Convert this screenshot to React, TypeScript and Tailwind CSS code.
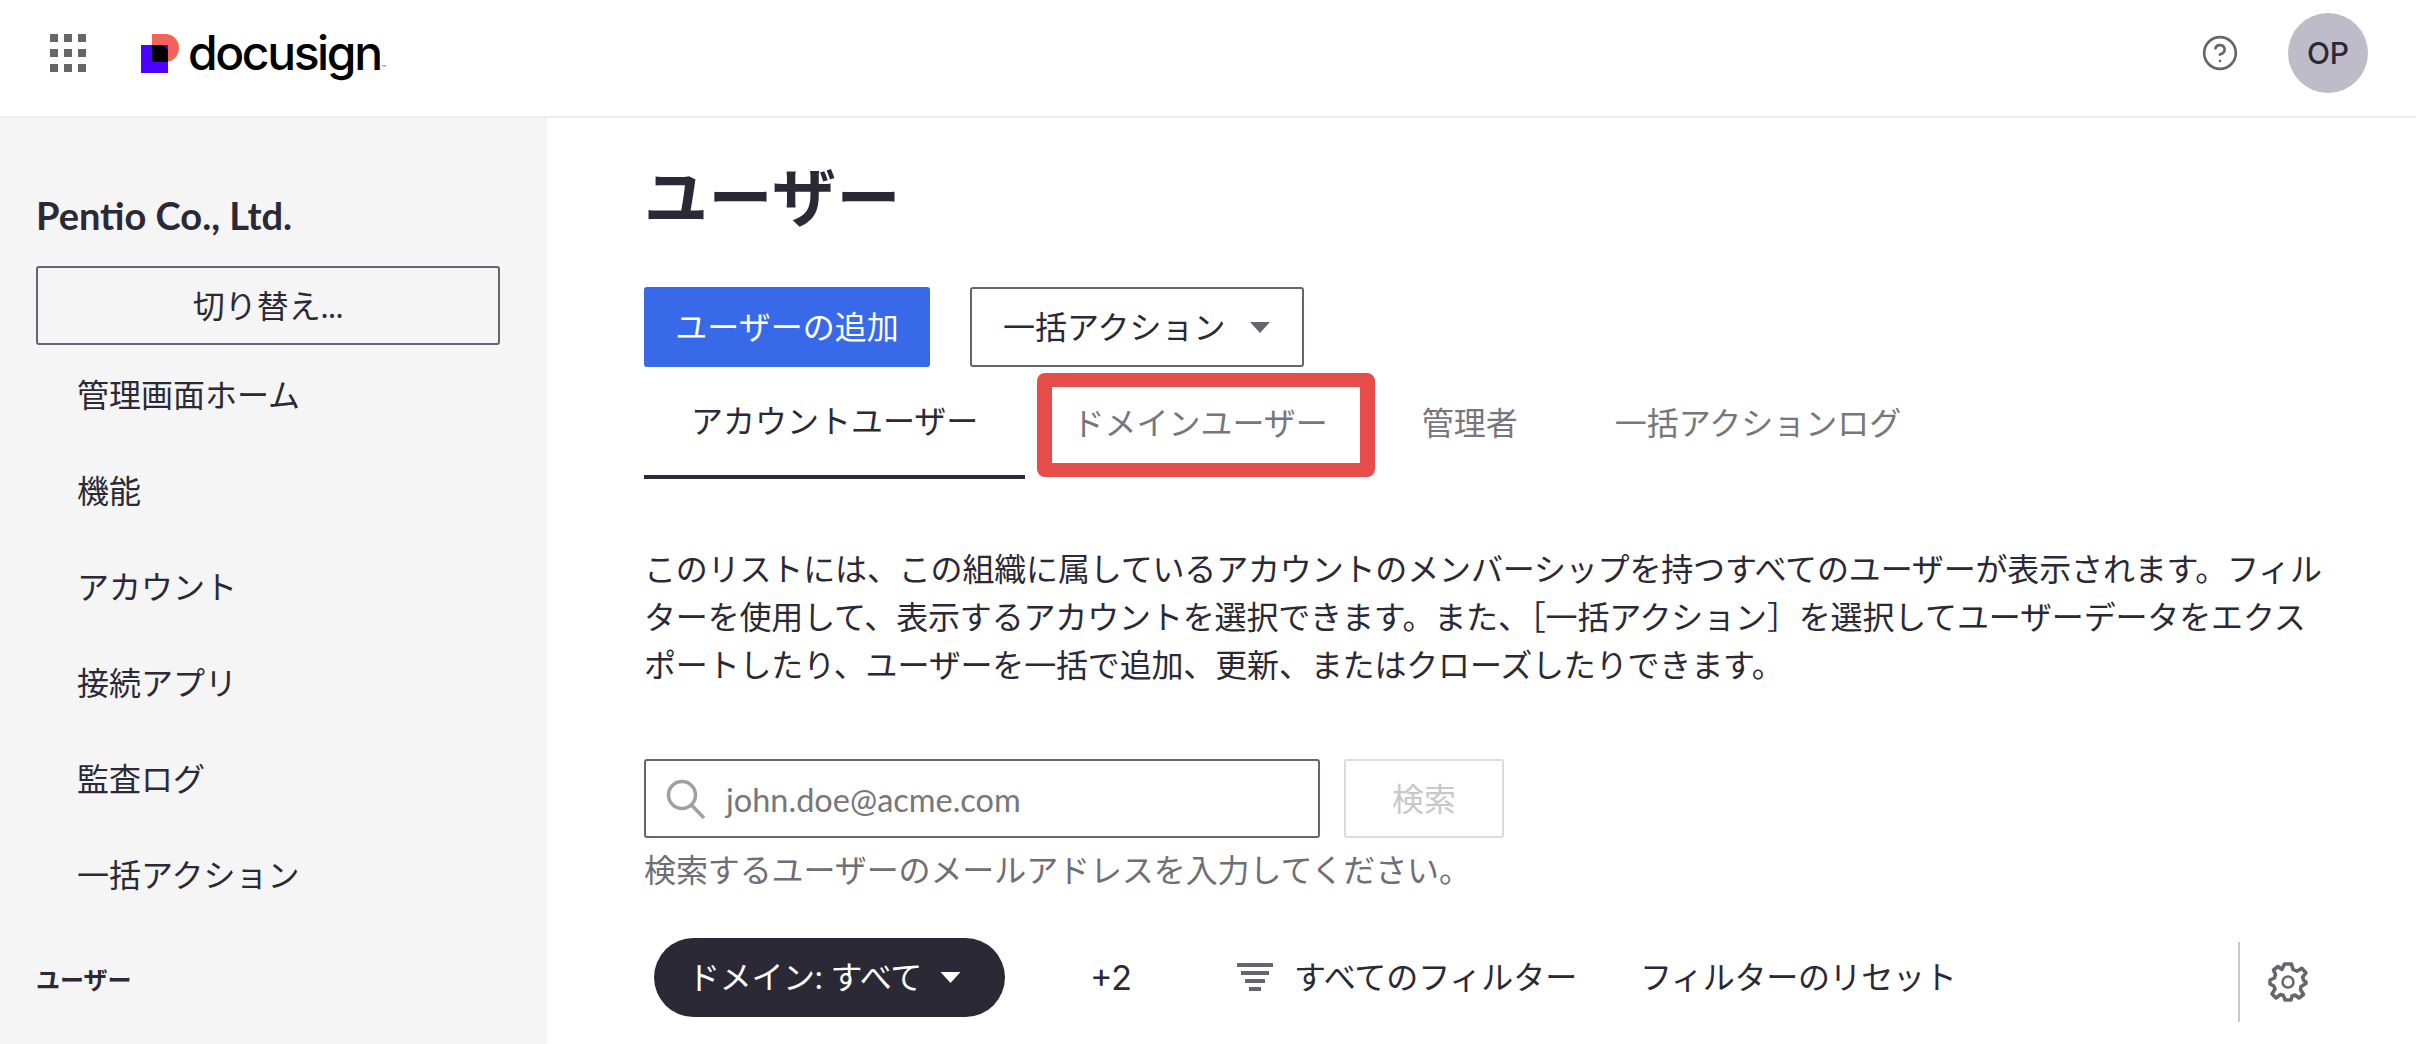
import { CircleHelp } from "lucide-react";

const navItems = ["管理画面ホーム", "機能", "アカウント", "接続アプリ", "監査ログ", "一括アクション"];

function Caret({ className }: { className: string }) {
  return (
    <svg viewBox="0 0 20 11" className={className} fill="currentColor">
      <path d="M0 0h20L10 11z" />
    </svg>
  );
}

function Logo() {
  return (
    <svg viewBox="0 0 38 39" className="w-[38px] h-[39px] shrink-0">
      <path d="M11 0H24C32 0 38 6 38 14C38 22 32 28 24 28H11Z" fill="#f0645a" />
      <rect x="0" y="11" width="27" height="28" fill="#4c00ff" />
      <path d="M11 11H20Q22 11 23.500 12.500L25.500 14.500Q27 16 27 18V28H11Z" fill="#000" />
    </svg>
  );
}

function GridIcon() {
  return (
    <div className="grid grid-cols-3 gap-x-[6px] gap-y-[7px] w-[36px]">
      {Array.from({ length: 9 }).map((_, i) => (
        <div key={i} className="h-[8px] w-[8px] bg-[#66656d]" />
      ))}
    </div>
  );
}

function GearIcon() {
  return (
    <svg viewBox="0 0 40 40" className="w-[40px] h-[40px] text-[#66656d]" fill="none" stroke="currentColor" strokeWidth="3.500" strokeLinejoin="round">
      <path d="M16.500 2H23.500L25 7.500L29 9.200L33.800 6.200L38 11L34.500 15.200L35.800 18.500L38 20L38 21.500L33 24.500L32.500 27.500L35.500 32.500L31 36L27 33L24 34L23 38H17L15.500 33.500L12.500 32.500L8 36L4 32L7 27L5.800 24L2 22V18L6.500 16L7.500 12.500L5.500 8L10 4.500L14 7.500Z" />
      <circle cx="20" cy="20" r="5.500" strokeWidth="2.500" />
    </svg>
  );
}

function Header() {
  return (
    <header className="h-[118px] shrink-0 flex items-center border-b-2 border-[#eeeeee] pl-[50px] pr-[48px] pb-[10px] bg-white">
      <GridIcon />
      <div className="flex items-center ml-[55px]">
        <Logo />
        <span className="ml-[9px] font-['Inter',sans-serif] font-medium text-[48px] leading-none tracking-[-2.4px] text-black">
          docusign
        </span>
        <span className="ml-[1px] mt-[28px] text-[6px] leading-none text-[#66656d]">™</span>
      </div>
      <div className="ml-auto flex items-center gap-[49px]">
        <CircleHelp className="w-[38px] h-[38px] text-[#66656d]" strokeWidth={1.7} />
        <div className="w-[80px] h-[80px] rounded-full bg-[#bfbcc9] flex items-center justify-center font-['Inter',sans-serif] text-[30px] font-medium text-[#2b2936]">
          OP
        </div>
      </div>
    </header>
  );
}

function Sidebar() {
  return (
    <aside className="w-[547px] shrink-0 bg-[#f5f5f5] pl-[36px] pr-[47px] pt-[72px]">
      <div className="text-[38px] leading-[50px] font-bold text-[#2b2936]">Pentio Co., Ltd.</div>
      <button className="mt-[26px] w-full h-[79px] rounded-[3px] border-2 border-[#66656d] text-[32px] text-[#2b2936]">
        切り替え...
      </button>
      <ul className="mt-[2px]">
        {navItems.map((item) => (
          <li key={item} className="h-[96px] flex items-center pl-[41px] text-[32px] text-[#2b2936]">
            {item}
          </li>
        ))}
      </ul>
      <div className="mt-[39px] text-[24px] leading-[36px] font-bold text-[#2b2936]">ユーザー</div>
    </aside>
  );
}

function Tabs() {
  return (
    <div className="relative flex h-[112px] text-[32px]">
      <div className="flex items-center px-[47px] border-b-4 border-[#2b2936] text-[#2b2936]">アカウントユーザー</div>
      <div className="flex items-center px-[47px] text-[#77767c]">ドメインユーザー</div>
      <div className="flex items-center px-[47px] text-[#77767c]">管理者</div>
      <div className="flex items-center pl-[50px] text-[#77767c]">一括アクションログ</div>
      {/* annotation box */}
      <div className="absolute left-[393px] top-[6px] w-[338px] h-[104px] rounded-[8px] border-x-[15px] border-y-[14px] border-[#e64c4a]" />
    </div>
  );
}

function Main() {
  return (
    <main className="flex-1 pl-[97px] pr-[60px] text-[#2b2936]">
      <h1 className="mt-[37px] text-[64px] leading-[84px] font-bold tracking-[0.6px]">ユーザー</h1>
      <div className="mt-[48px] flex gap-[40px]">
        <button className="h-[80px] w-[286px] rounded-[3px] bg-[#3869e8] text-[32px] text-white">ユーザーの追加</button>
        <button className="h-[80px] w-[334px] rounded-[3px] border-2 border-[#66656d] bg-white text-[32px] flex items-center pl-[31px]">
          一括アクション
          <Caret className="ml-[25px] w-[20px] h-[11px] text-[#66656d]" />
        </button>
      </div>
      <Tabs />
      <p className="mt-[66px] w-[1690px] text-[32px] leading-[48px] tracking-[-0.16px]">
        このリストには、この組織に属しているアカウントのメンバーシップを持つすべてのユーザーが表示されます。フィルターを使用して、表示するアカウントを選択できます。また、［一括アクション］を選択してユーザーデータをエクスポートしたり、ユーザーを一括で追加、更新、またはクローズしたりできます。
      </p>
      <div className="mt-[70px] flex gap-[24px]">
        <div className="h-[79px] w-[676px] rounded-[3px] border-2 border-[#66656d] flex items-center pl-[20px]">
          <svg viewBox="0 0 40 40" className="w-[40px] h-[40px] text-[#a0a0a0]" fill="none" stroke="currentColor" strokeWidth="3.500">
            <circle cx="16" cy="16" r="13.500" />
            <path d="M25.500 26L38 39" />
          </svg>
          <span className="ml-[20px] mt-[3px] font-['Lato',sans-serif] text-[32.500px] text-[#77767c]">john.doe@acme.com</span>
        </div>
        <button className="h-[79px] w-[160px] rounded-[3px] border-2 border-[#dcdcdc] text-[32px] text-[#c8c8c8]">検索</button>
      </div>
      <div className="mt-[8px] text-[32px] leading-[48px] text-[#6f6e75] tracking-[-0.1px]">検索するユーザーのメールアドレスを入力してください。</div>
      <div className="mt-[43px] flex items-center h-[80px] text-[32px]">
        <button className="ml-[10px] h-[79px] w-[351px] rounded-full bg-[#2b2936] text-white flex items-center pl-[34px] tracking-[-0.3px]">
          ドメイン: すべて
          <Caret className="ml-[18px] w-[21px] h-[11px] text-white" />
        </button>
        <span className="ml-[85px] font-['Inter',sans-serif] text-[34px]">+2</span>
        <svg viewBox="0 0 36 28" className="ml-[105px] w-[36px] h-[28px] text-[#66656d]" fill="currentColor">
          <rect x="0" y="0" width="36" height="4" />
          <rect x="4" y="8" width="28" height="4" />
          <rect x="8" y="16" width="20" height="4" />
          <rect x="12" y="24" width="12" height="4" />
        </svg>
        <span className="ml-[21px] tracking-[-0.1px]">すべてのフィルター</span>
        <span className="ml-[63px] tracking-[-0.3px]">フィルターのリセット</span>
        <div className="ml-[282px] mt-[10px] h-[80px] w-[2px] bg-[#c8c8c8]" />
        <div className="ml-[28px] mt-[10px]">
          <GearIcon />
        </div>
      </div>
    </main>
  );
}

export default function App() {
  return (
    <div className="h-[1044px] w-[2416px] overflow-hidden flex flex-col bg-white font-['Lato','Noto_Sans_CJK_JP',sans-serif]">
      <Header />
      <div className="flex flex-1 min-h-0">
        <Sidebar />
        <Main />
      </div>
    </div>
  );
}
